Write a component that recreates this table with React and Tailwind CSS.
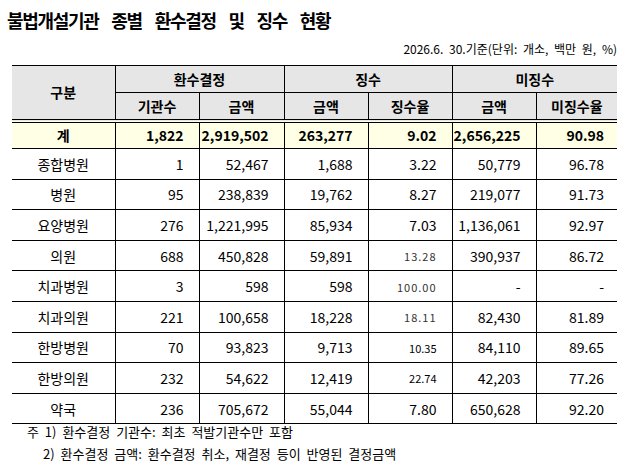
import React from "react";

const ROWS = [
  ["종합병원", "1", "52,467", "1,688", "3.22", "50,779", "96.78"],
  ["병원", "95", "238,839", "19,762", "8.27", "219,077", "91.73"],
  ["요양병원", "276", "1,221,995", "85,934", "7.03", "1,136,061", "92.97"],
  ["의원", "688", "450,828", "59,891", "13.28", "390,937", "86.72"],
  ["치과병원", "3", "598", "598", "100.00", "-", "-"],
  ["치과의원", "221", "100,658", "18,228", "18.11", "82,430", "81.89"],
  ["한방병원", "70", "93,823", "9,713", "10.35", "84,110", "89.65"],
  ["한방의원", "232", "54,622", "12,419", "22.74", "42,203", "77.26"],
  ["약국", "236", "705,672", "55,044", "7.80", "650,628", "92.20"],
];

// rates that the source document renders in a smaller, odd font
const SPACED_RATES = ["13.28", "100.00", "18.11"];
const SMALL_RATES = ["10.35", "22.74"];

const rateClass = (v) => {
  if (SPACED_RATES.includes(v)) return "text-[11px] tracking-[1px] text-[#333]";
  if (SMALL_RATES.includes(v)) return "text-[11px]";
  return "";
};

const DataRow = ({ row }) => (
  <tr className="h-[30.6px]">
    <td className="border-b border-black text-center">{row[0]}</td>
    {row.slice(1).map((v, i) => (
      <td
        key={i}
        className={`border-b border-l border-black text-right ${i === 5 ? "pr-[13px]" : "pr-[15px]"}`}
      >
        <span className={i === 3 ? rateClass(v) : ""}>{v}</span>
      </td>
    ))}
  </tr>
);

export default function App() {
  return (
    <div className="w-[627px] h-[470px] bg-white text-black font-['Noto_Sans_CJK_KR',sans-serif] overflow-hidden">
      <h1 className="pl-[7px] pt-[9px] text-[18px] font-bold leading-[22px] tracking-[-1.3px] [word-spacing:10px]">
        불법개설기관 종별 환수결정 및 징수 현황
      </h1>
      <p className="mt-[11px] pr-[10px] text-right text-[12px] leading-[14px] [word-spacing:3px]">
        2026.6. 30.기준(단위: 개소, 백만 원, %)
      </p>

      <table className="mt-[9px] ml-[12px] w-[605px] table-fixed border-collapse text-[14px] leading-[18px]">
        <colgroup>
          <col className="w-[103px]" />
          <col className="w-[84px]" />
          <col className="w-[85px]" />
          <col className="w-[84px]" />
          <col className="w-[84px]" />
          <col className="w-[84px]" />
          <col className="w-[81px]" />
        </colgroup>
        <thead className="bg-[#e6e6e6] font-bold">
          <tr className="h-[27px]">
            <th rowSpan={2} className="border-t border-b-4 border-double border-black font-bold">
              구분
            </th>
            <th colSpan={2} className="border-t border-b border-l border-black font-bold">
              환수결정
            </th>
            <th colSpan={2} className="border-t border-b border-l border-black font-bold">
              징수
            </th>
            <th colSpan={2} className="border-t border-b border-l border-black font-bold">
              미징수
            </th>
          </tr>
          <tr className="h-[28px]">
            {["기관수", "금액", "금액", "징수율", "금액", "미징수율"].map((t, i) => (
              <th key={i} className="border-b-4 border-double border-l border-l-black border-black font-bold">
                {t}
              </th>
            ))}
          </tr>
        </thead>
        <tbody>
          <tr className="h-[28px] bg-[#ffffe6] font-bold">
            <td className="border-b border-black text-center">계</td>
            {["1,822", "2,919,502", "263,277", "9.02", "2,656,225", "90.98"].map((v, i) => (
              <td
                key={i}
                className={`border-b border-l border-black text-right ${i === 5 ? "pr-[13px]" : "pr-[15px]"}`}
              >
                {v}
              </td>
            ))}
          </tr>
          {ROWS.map((r) => (
            <DataRow key={r[0]} row={r} />
          ))}
        </tbody>
      </table>

      <p className="pl-[27px] text-[13px] leading-[16px] [word-spacing:3px]">
        주 1) 환수결정 기관수: 최초 적발기관수만 포함
      </p>
      <p className="mt-[6px] pl-[43px] text-[13px] leading-[16px] [word-spacing:3px]">
        2) 환수결정 금액: 환수결정 취소, 재결정 등이 반영된 결정금액
      </p>
    </div>
  );
}
